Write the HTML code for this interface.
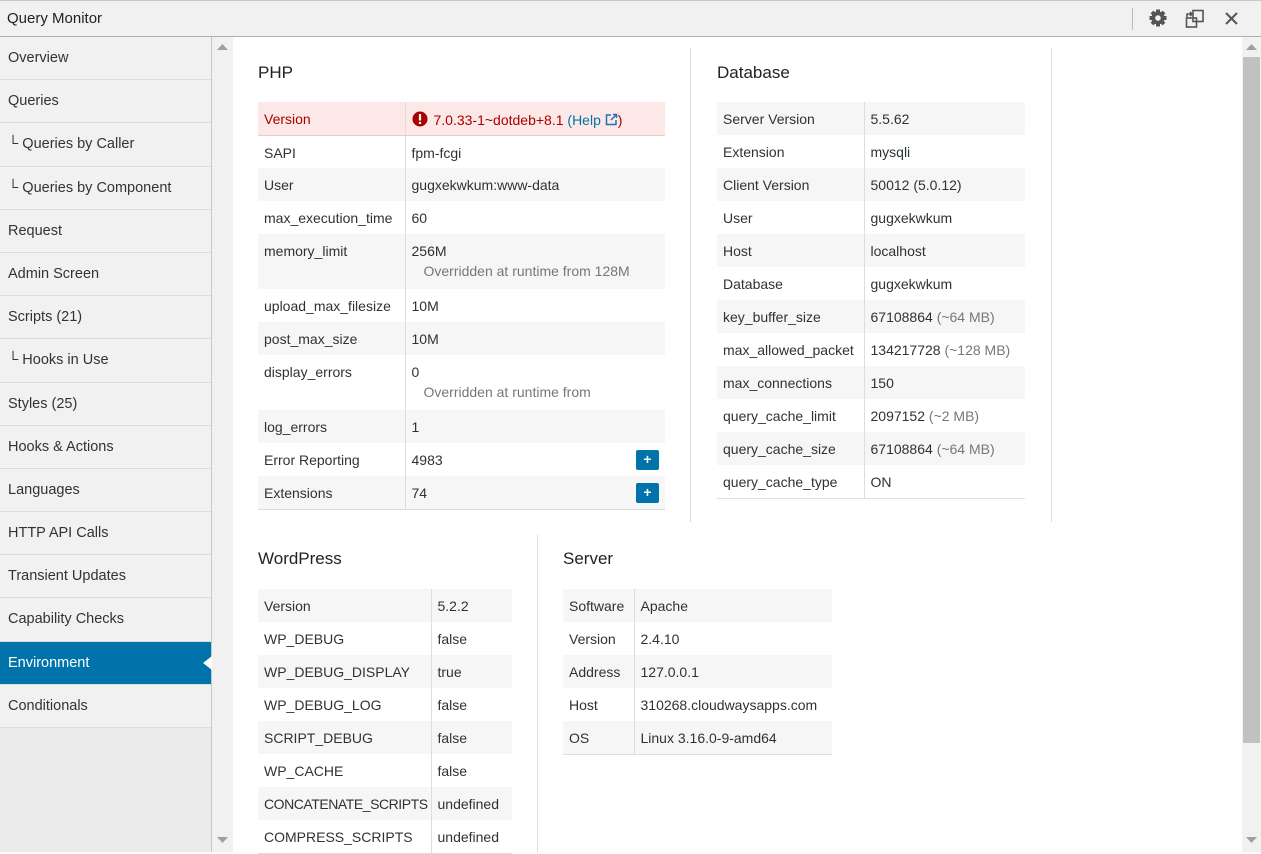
<!DOCTYPE html>
<html><head><meta charset="utf-8">
<style>
*{box-sizing:border-box;margin:0;padding:0}
body{width:1261px;height:852px;overflow:hidden;font-family:"Liberation Sans",sans-serif;font-size:14px;color:#2c3338;background:#fff;position:relative}
#top{position:absolute;left:0;top:0;width:1261px;height:37px;background:#f1f1f1;border-top:1px solid #c8c8c8;border-bottom:1px solid #b0b0b0}
#top .t{position:absolute;left:7px;top:9px;font-size:15px;color:#222}
#top .sep{position:absolute;left:1132px;top:7px;width:1px;height:22px;background:#bbb}
#side{position:absolute;left:0;top:37px;width:212px;height:815px;background:#ebebeb;border-right:1px solid #c8c8c8}
#side div{height:43.2px;line-height:43px;padding-left:8px;background:#f1f1f1;border-bottom:1px solid #dcdcdc;color:#333;position:relative;font-size:14.5px}
#side div.act{background:#0073aa;color:#fff}
#side div.act:after{content:"";position:absolute;right:-1px;top:14px;border:7px solid transparent;border-right-color:#fff;border-right-width:9px}
#gut{position:absolute;left:212px;top:37px;width:21px;height:815px;background:#f1f1f1}
#sb{position:absolute;left:1242px;top:37px;width:19px;height:815px;background:#f1f1f1}
#sb .th{position:absolute;left:1px;top:20px;width:17px;height:686px;background:#c1c1c1}
.h{position:absolute;font-size:17px;color:#222}
table{position:absolute;border-collapse:collapse;table-layout:fixed;border-bottom:1px solid #ddd}
td{height:33px;padding:0 6px;vertical-align:top;padding-top:9px;white-space:nowrap;color:#2c3338;overflow:hidden}
td:first-child{border-right:1px solid #ddd}
tr:nth-child(odd) td{background:#f6f6f6}
.g{color:#777}
.sub{color:#777;padding-left:12px;display:block;margin-top:4px}
.vl{position:absolute;width:1px;background:#ddd}
.plus{position:absolute;right:6px;top:7px;width:23px;height:20px;background:#0073aa;border-radius:2px;color:#fff;text-align:center;line-height:19px;font-size:14px;font-weight:bold}
</style></head><body>
<div id="top"><span class="t">Query Monitor</span><span class="sep"></span>
<svg style="position:absolute;left:1148px;top:7px" width="20" height="20" viewBox="0 0 20 20"><g fill="#555"><circle cx="10" cy="10" r="6.5"/><rect x="8" y="1.5" width="4" height="17"/><rect x="1.5" y="8" width="17" height="4"/><rect x="8" y="1.5" width="4" height="17" transform="rotate(45 10 10)"/><rect x="8" y="1.5" width="4" height="17" transform="rotate(-45 10 10)"/></g><circle cx="10" cy="10" r="2.8" fill="#f1f1f1"/></svg>
<svg style="position:absolute;left:1185px;top:8px" width="20" height="20" viewBox="0 0 20 20" fill="none" stroke="#555" stroke-width="1.6"><rect x="8" y="1.5" width="10" height="11"/><rect x="1.5" y="9" width="10" height="9"/><path d="M2 8V5h4M5 3l2 2-2 2"/></svg>
<svg style="position:absolute;left:1224px;top:10px" width="15" height="15" viewBox="0 0 15 15" stroke="#555" stroke-width="2"><path d="M2 2L13 13M13 2L2 13"/></svg>
</div>
<div id="side">
<div>Overview</div><div>Queries</div><div>└ Queries by Caller</div><div>└ Queries by Component</div><div>Request</div><div>Admin Screen</div><div>Scripts (21)</div><div>└ Hooks in Use</div><div>Styles (25)</div><div>Hooks &amp; Actions</div><div>Languages</div><div>HTTP API Calls</div><div>Transient Updates</div><div>Capability Checks</div><div class="act">Environment</div><div>Conditionals</div>
</div>
<div id="gut"><svg style="position:absolute;left:5px;top:6px" width="11" height="8"><path d="M0 7L5.5 1 11 7z" fill="#a0a0a0"/></svg><svg style="position:absolute;left:5px;top:799px" width="11" height="8"><path d="M0 1L5.5 7 11 1z" fill="#a0a0a0"/></svg></div>
<div id="sb"><svg style="position:absolute;left:4px;top:6px" width="11" height="8"><path d="M0 7L5.5 1 11 7z" fill="#a0a0a0"/></svg><div class="th"></div><svg style="position:absolute;left:4px;top:799px" width="11" height="8"><path d="M0 1L5.5 7 11 1z" fill="#a0a0a0"/></svg></div>

<div class="h" style="left:258px;top:63px">PHP</div>
<table style="left:258px;top:102px;width:407px"><colgroup><col style="width:147px"><col></colgroup>
<tr><td style="background:#fde8e8;color:#a00;border-bottom:1px solid #f4c6c6">Version</td><td style="background:#fde8e8;color:#a00;border-bottom:1px solid #f4c6c6"><svg width="16" height="16" viewBox="0 0 16 16" style="vertical-align:-2px;margin-right:6px"><circle cx="8" cy="8" r="7.5" fill="#a00"/><rect x="6.9" y="3" width="2.2" height="6.5" fill="#fff"/><rect x="6.9" y="10.8" width="2.2" height="2.2" fill="#fff"/></svg>7.0.33-1~dotdeb+8.1 <span style="color:#0073aa">(Help <svg width="13" height="13" viewBox="0 0 13 13" fill="none" stroke="#2271b1" stroke-width="1.5" style="vertical-align:-1px"><path d="M6 2H1.5v9.5H11V7M8 1.5h3.5V5M11.5 1.5L6 7"/></svg></span><span style="color:#a00">)</span></td></tr>
<tr><td style="background:#fff">SAPI</td><td style="background:#fff">fpm-fcgi</td></tr>
<tr><td style="background:#f6f6f6">User</td><td style="background:#f6f6f6">gugxekwkum:www-data</td></tr>
<tr><td style="background:#fff">max_execution_time</td><td style="background:#fff">60</td></tr>
<tr><td style="background:#f6f6f6;height:55px">memory_limit</td><td style="background:#f6f6f6">256M<span class="sub">Overridden at runtime from 128M</span></td></tr>
<tr><td style="background:#fff">upload_max_filesize</td><td style="background:#fff">10M</td></tr>
<tr><td style="background:#f6f6f6">post_max_size</td><td style="background:#f6f6f6">10M</td></tr>
<tr><td style="background:#fff;height:55px">display_errors</td><td style="background:#fff">0<span class="sub">Overridden at runtime from</span></td></tr>
<tr><td style="background:#f6f6f6">log_errors</td><td style="background:#f6f6f6">1</td></tr>
<tr><td style="background:#fff">Error Reporting</td><td style="background:#fff;position:relative">4983<span class="plus">+</span></td></tr>
<tr><td style="background:#f6f6f6">Extensions</td><td style="background:#f6f6f6;position:relative">74<span class="plus">+</span></td></tr>
</table>
<div class="vl" style="left:690px;top:48px;height:474px"></div>
<div class="vl" style="left:1051px;top:48px;height:474px"></div>

<div class="h" style="left:717px;top:63px">Database</div>
<table style="left:717px;top:102px;width:308px"><colgroup><col style="width:147px"><col></colgroup>
<tr><td>Server Version</td><td>5.5.62</td></tr>
<tr><td>Extension</td><td>mysqli</td></tr>
<tr><td>Client Version</td><td>50012 (5.0.12)</td></tr>
<tr><td>User</td><td>gugxekwkum</td></tr>
<tr><td>Host</td><td>localhost</td></tr>
<tr><td>Database</td><td>gugxekwkum</td></tr>
<tr><td>key_buffer_size</td><td>67108864 <span class="g">(~64 MB)</span></td></tr>
<tr><td>max_allowed_packet</td><td>134217728 <span class="g">(~128 MB)</span></td></tr>
<tr><td>max_connections</td><td>150</td></tr>
<tr><td>query_cache_limit</td><td>2097152 <span class="g">(~2 MB)</span></td></tr>
<tr><td>query_cache_size</td><td>67108864 <span class="g">(~64 MB)</span></td></tr>
<tr><td>query_cache_type</td><td>ON</td></tr>
</table>

<div class="h" style="left:258px;top:549px">WordPress</div>
<table style="left:258px;top:589px;width:254px"><colgroup><col style="width:173px"><col></colgroup>
<tr><td>Version</td><td>5.2.2</td></tr>
<tr><td>WP_DEBUG</td><td>false</td></tr>
<tr><td>WP_DEBUG_DISPLAY</td><td>true</td></tr>
<tr><td>WP_DEBUG_LOG</td><td>false</td></tr>
<tr><td>SCRIPT_DEBUG</td><td>false</td></tr>
<tr><td>WP_CACHE</td><td>false</td></tr>
<tr><td style="letter-spacing:-0.45px">CONCATENATE_SCRIPTS</td><td>undefined</td></tr>
<tr><td>COMPRESS_SCRIPTS</td><td>undefined</td></tr>
</table>
<div class="vl" style="left:537px;top:535px;height:317px"></div>

<div class="h" style="left:563px;top:549px">Server</div>
<table style="left:563px;top:589px;width:269px"><colgroup><col style="width:71px"><col></colgroup>
<tr><td>Software</td><td>Apache</td></tr>
<tr><td>Version</td><td>2.4.10</td></tr>
<tr><td>Address</td><td>127.0.0.1</td></tr>
<tr><td>Host</td><td>310268.cloudwaysapps.com</td></tr>
<tr><td>OS</td><td>Linux 3.16.0-9-amd64</td></tr>
</table>
</body></html>
